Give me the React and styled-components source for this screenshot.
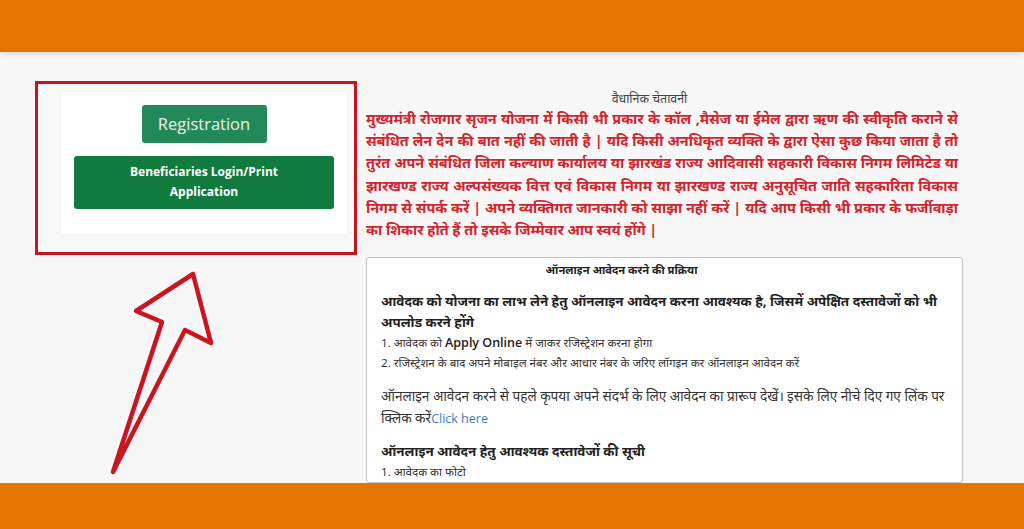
import React from "react"
import styled, { createGlobalStyle } from "styled-components"

const GlobalStyle = createGlobalStyle`
  html, body {
    margin: 0;
    padding: 0;
    background: #f7f7f7;
  }
  * {
    box-sizing: border-box;
  }
`

const Page = styled.div`
  width: 1024px;
  height: 529px;
  display: flex;
  flex-direction: column;
  overflow: hidden;
  background: #f7f7f7;
  font-family: "Noto Sans", "Open Sans", sans-serif;
`

const OrangeBar = styled.div`
  flex: 0 0 ${props => props.h}px;
  background: #e37500;
  box-shadow: ${props => (props.top ? "0 2px 6px rgba(0,0,0,0.12)" : "none")};
  position: relative;
  z-index: 2;
`

const Main = styled.main`
  flex: 1;
  min-height: 0;
  overflow: hidden;
  display: flex;
  align-items: flex-start;
  gap: 9px;
  padding: 29px 0 0 35px;
`

const LeftCol = styled.div`
  width: 322px;
  flex-shrink: 0;
  display: flex;
  flex-direction: column;
`

const Highlight = styled.div`
  border: 3px solid #c8141f;
  padding: 8px 7px 18px 23px;
  background: #f8f8f8;
`

const Card = styled.div`
  background: #fff;
  border-radius: 2px;
  box-shadow: 0 0 2px rgba(0, 0, 0, 0.06);
  padding: 13px 13px 25px;
  display: flex;
  flex-direction: column;
  align-items: center;
  gap: 13px;
`

const GreenButton = styled.button`
  border: none;
  border-radius: 3px;
  color: ${props => (props.primary ? "#e9f5ee" : "#fff")};
  background: ${props => (props.primary ? "#23895a" : "#117a3e")};
  font-family: "Open Sans", "Liberation Sans", sans-serif;
  font-size: ${props => (props.primary ? "16.5px" : "12px")};
  font-weight: ${props => (props.primary ? 400 : 700)};
  line-height: ${props => (props.primary ? "38px" : "20px")};
  width: ${props => (props.primary ? "125px" : "100%")};
  padding: ${props => (props.primary ? "0" : "6px 40px 7px")};
  cursor: pointer;
`

const Arrow = styled.svg`
  display: block;
  margin-top: 15px;
  overflow: visible;
`

const RightCol = styled.div`
  width: 597px;
  flex-shrink: 0;
`

const Notice = styled.div`
  padding-top: 8px;
`

const NoticeTitle = styled.div`
  text-align: center;
  color: #444;
  font-size: 12.4px;
  line-height: 19px;
  padding-right: 30px;
`

const NoticeText = styled.p`
  margin: 0 5px 0 0;
  color: #d3232c;
  font-size: 14.4px;
  font-weight: 700;
  line-height: 22.2px;
  text-align: justify;
  text-align-last: left;
`

const InfoBox = styled.div`
  margin-top: 16px;
  background: #fff;
  border: 1px solid #c4c4c4;
  border-radius: 3px;
  padding: 2px 14px 0;
  color: #222;
`

const BoxTitle = styled.div`
  text-align: center;
  font-weight: 700;
  font-size: 11.2px;
  line-height: 20px;
  margin-bottom: 11px;
  padding-right: 86px;
`

const Heading = styled.div`
  font-weight: 700;
  font-size: 13.4px;
  line-height: 21px;
`

const Line = styled.div`
  font-size: 11.6px;
  line-height: 20px;
  color: #333;
`

const Para = styled.div`
  font-size: 13.6px;
  line-height: 22px;
  color: #333;
  margin: 12px 0 11px;
`

const Latin = styled.span`
  font-family: "Open Sans", "Liberation Sans", sans-serif;
  font-weight: ${props => (props.link ? 400 : 600)};
  font-size: 12.5px;
  color: ${props => (props.link ? "#3c7dbf" : "#222")};
`

export default function App() {
  return (
    <>
      <GlobalStyle />
      <Page>
        <OrangeBar h={52} top />
        <Main>
          <LeftCol>
            <Highlight>
              <Card>
                <GreenButton primary>Registration</GreenButton>
                <GreenButton>Beneficiaries Login/Print Application</GreenButton>
              </Card>
            </Highlight>
            <Arrow width="322" height="210" viewBox="35 270 322 210">
              <polygon
                points="113,472 162,322 136,311 193,274 211,343 185,330"
                fill="none"
                stroke="#cc1420"
                strokeWidth="4.5"
                strokeLinejoin="round"
              />
            </Arrow>
          </LeftCol>
          <RightCol>
            <Notice>
              <NoticeTitle>वैधानिक चेतावनी</NoticeTitle>
              <NoticeText>
                मुख्यमंत्री रोजगार सृजन योजना में किसी भी प्रकार के कॉल ,मैसेज या ईमेल द्वारा ऋण की स्वीकृति कराने से
                संबंधित लेन देन की बात नहीं की जाती है | यदि किसी अनधिकृत व्यक्ति के द्वारा ऐसा कुछ किया जाता है तो
                तुरंत अपने संबंधित जिला कल्याण कार्यालय या झारखंड राज्य आदिवासी सहकारी विकास निगम लिमिटेड या
                झारखण्ड राज्य अल्पसंख्यक वित्त एवं विकास निगम या झारखण्ड राज्य अनुसूचित जाति सहकारिता विकास
                निगम से संपर्क करें | अपने व्यक्तिगत जानकारी को साझा नहीं करें | यदि आप किसी भी प्रकार के फर्जीवाड़ा
                का शिकार होते हैं तो इसके जिम्मेवार आप स्वयं होंगे |
              </NoticeText>
            </Notice>
            <InfoBox>
              <BoxTitle>ऑनलाइन आवेदन करने की प्रक्रिया</BoxTitle>
              <Heading>
                आवेदक को योजना का लाभ लेने हेतु ऑनलाइन आवेदन करना आवश्यक है, जिसमें अपेक्षित दस्तावेजों को भी
                अपलोड करने होंगे
              </Heading>
              <Line>
                1. आवेदक को <Latin>Apply Online</Latin> में जाकर रजिस्ट्रेशन करना होगा
              </Line>
              <Line>2. रजिस्ट्रेशन के बाद अपने मोबाइल नंबर और आधार नंबर के जरिए लॉगइन कर ऑनलाइन आवेदन करें</Line>
              <Para>
                ऑनलाइन आवेदन करने से पहले कृपया अपने संदर्भ के लिए आवेदन का प्रारूप देखें। इसके लिए नीचे दिए गए लिंक पर
                क्लिक करें<Latin link>Click here</Latin>
              </Para>
              <Heading>ऑनलाइन आवेदन हेतु आवश्यक दस्तावेजों की सूची</Heading>
              <Line>1. आवेदक का फोटो</Line>
            </InfoBox>
          </RightCol>
        </Main>
        <OrangeBar h={46} />
      </Page>
    </>
  )
}
